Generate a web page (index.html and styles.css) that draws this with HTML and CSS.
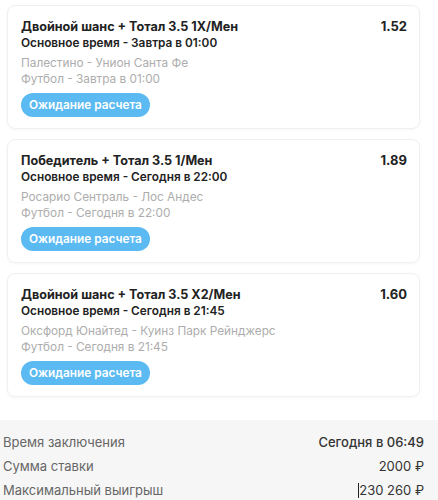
FILE: index.html
```html
<!DOCTYPE html>
<html lang="ru">

<head>
    <meta charset="UTF-8" />
    <meta name="viewport" content="width=device-width, initial-scale=1.0" />
    <title>Купон</title>
    <link rel="stylesheet" href="styles.css">
</head>

<body>
    <div class="bets">
        <div class="bet">
            <div class="bet-head">
                <div class="bet-title">Двойной шанс + Тотал 3.5 1Х/Мен</div>
                <div class="bet-odds">1.52</div>
            </div>
            <div class="bet-time">Основное время - Завтра в 01:00</div>
            <div class="bet-info">
                <div>Палестино - Унион Санта Фе</div>
                <div>Футбол - Завтра в 01:00</div>
            </div>
            <span class="bet-status">Ожидание расчета</span>
        </div>

        <div class="bet">
            <div class="bet-head">
                <div class="bet-title">Победитель + Тотал 3.5 1/Мен</div>
                <div class="bet-odds">1.89</div>
            </div>
            <div class="bet-time">Основное время - Сегодня в 22:00</div>
            <div class="bet-info">
                <div>Росарио Сентраль - Лос Андес</div>
                <div>Футбол - Сегодня в 22:00</div>
            </div>
            <span class="bet-status">Ожидание расчета</span>
        </div>

        <div class="bet">
            <div class="bet-head">
                <div class="bet-title">Двойной шанс + Тотал 3.5 Х2/Мен</div>
                <div class="bet-odds">1.60</div>
            </div>
            <div class="bet-time">Основное время - Сегодня в 21:45</div>
            <div class="bet-info">
                <div>Оксфорд Юнайтед - Куинз Парк Рейнджерс</div>
                <div>Футбол - Сегодня в 21:45</div>
            </div>
            <span class="bet-status">Ожидание расчета</span>
        </div>
    </div>

    <div class="summary">
        <div class="summary-row">
            <span class="summary-label">Время заключения</span>
            <span class="summary-value strong">Сегодня в 06:49</span>
        </div>
        <div class="summary-row">
            <span class="summary-label">Сумма ставки</span>
            <span class="summary-value">2000 ₽</span>
        </div>
        <div class="summary-row">
            <span class="summary-label">Максимальный выигрыш</span>
            <span class="summary-value"><span class="caret"></span>230 260 ₽</span>
        </div>
    </div>
</body>

</html>
```

FILE: styles.css
```css
body {
    font-family: Inter, "Noto Sans", sans-serif;
    margin: 0;
    padding: 0;
    background-color: #fff;
    color: #222;
}

.bets {
    display: flex;
    flex-direction: column;
    gap: 10px;
    padding: 5px 18px 0 7px;
}

.bet {
    display: flex;
    flex-direction: column;
    align-items: flex-start;
    padding: 12px 12px 11px 13px;
    border: 1px solid #f0f0f0;
    border-radius: 8px;
    box-shadow: 0 1px 3px rgba(0, 0, 0, 0.04);
}

.bet-head {
    display: flex;
    justify-content: space-between;
    align-self: stretch;
}

.bet-title {
    font-size: 12.6px;
    line-height: 17px;
    font-weight: 700;
}

.bet-odds {
    font-size: 13px;
    line-height: 17px;
    font-weight: 700;
}

.bet-time {
    font-size: 11.8px;
    line-height: 17px;
    font-weight: 600;
}

.bet-info {
    margin-top: 3px;
    font-size: 11.8px;
    line-height: 16px;
    color: #adadad;
}

.bet-status {
    margin-top: 6px;
    height: 24px;
    line-height: 24px;
    padding: 0 8px;
    border-radius: 12px;
    background-color: #5cbaf2;
    color: #fff;
    font-size: 11.8px;
    font-weight: 600;
}

.summary {
    margin-top: 23px;
    padding: 10px 14px 0 3px;
    background-color: #f6f6f6;
    min-height: 80px;
}

.summary-row {
    display: flex;
    justify-content: space-between;
    line-height: 24px;
    font-size: 13px;
}

.summary-label {
    color: #666;
}

.summary-value {
    color: #333;
}

.summary-value.strong {
    font-weight: 500;
}

.caret {
    display: inline-block;
    width: 1px;
    height: 15px;
    background-color: #222;
    vertical-align: -3px;
}
```
